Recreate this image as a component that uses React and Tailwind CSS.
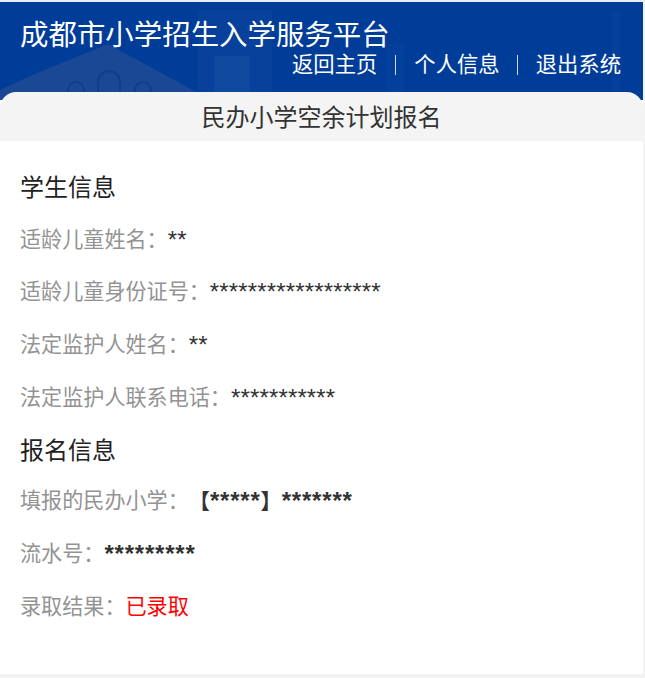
import React from 'react'

const cjk = 'font-["Liberation_Sans","Noto_Sans_CJK_SC",sans-serif]'

function Row({ label, children, className = '' }) {
  return (
    <div className="h-[52.67px] flex items-center pl-5 text-[21.1px] leading-[52px]">
      <span className="text-[#939393]">{label}</span>
      <span className={className}>{children}</span>
    </div>
  )
}

function HeaderArt() {
  return (
    <svg className="absolute inset-0 w-full h-full" viewBox="0 0 643 98" fill="none">
      <path d="M0 88 L30 74 L108 42 L200 92 L200 98 L0 98 Z" fill="#1a4894" />
      <path d="M68 92 v-4 a8 8 0 0 1 16 0 v4 M98 92 v-12 a10 10 0 0 1 22 0 v12 M135 92 v-4 a8 8 0 0 1 16 0 v4" stroke="#123d88" strokeWidth="2" />
      <rect x="198" y="8" width="74" height="90" fill="#07419b" />
      <rect x="214" y="54" width="36" height="44" fill="#0f499e" />
      <rect x="386" y="42" width="18" height="50" fill="#03409c" />
      <rect x="612" y="8" width="8" height="84" fill="#03409b" />
    </svg>
  )
}

export default function App() {
  return (
    <div className={`w-[645px] h-[678px] overflow-hidden bg-[#f3f3f3] flex flex-col ${cjk}`}>
      <div className="h-[2px] bg-[#e8edf4]" />
      <div className="w-[643px] flex-1 bg-white flex flex-col">
        {/* header */}
        <div className="relative h-[98px] bg-[#003d98] text-white overflow-hidden shrink-0">
          <HeaderArt />
          <div className="relative pl-5 pr-[22px]">
            <h1 className="text-[28.44px] leading-[32px] pt-[17px] font-normal">成都市小学招生入学服务平台</h1>
            <div className="flex justify-end items-center text-[21.33px] leading-[26px] mt-[1px]">
              <span>返回主页</span>
              <span className="w-px h-5 bg-white/80 mx-[18px]" />
              <span>个人信息</span>
              <span className="w-px h-5 bg-white/80 ml-[17px] mr-[18px]" />
              <span>退出系统</span>
            </div>
          </div>
        </div>

        {/* content */}
        <div className="-mt-2 relative rounded-t-2xl bg-[#f4f4f4] h-[48.5px] pt-[3px] shrink-0 flex items-center justify-center text-[24px] text-[#333]">
          民办小学空余计划报名
        </div>
        <div className="pt-[24px]">
          <h2 className="pl-5 text-[24px] h-[46px] font-normal text-[#222] flex items-center">学生信息</h2>
          <div className="pt-[3px]">
            <Row label="适龄儿童姓名：" className="text-[#333] text-[24px] tracking-[0.15px]">**</Row>
            <Row label="适龄儿童身份证号：" className="text-[#333] text-[24px] tracking-[0.15px]">******************</Row>
            <Row label="法定监护人姓名：" className="text-[#333] text-[24px] tracking-[0.15px]">**</Row>
            <Row label="法定监护人联系电话：" className="text-[#333] text-[24px] tracking-[0.15px]">***********</Row>
          </div>
          <h2 className="pl-5 text-[24px] h-[46px] font-normal text-[#222] flex items-center mt-[4px]">报名信息</h2>
          <div className="pt-[1px]">
            <Row label="填报的民办小学：" className="text-[#333] font-bold">
              【<span className="text-[24px] tracking-[0.8px]">*****</span>】<span className="text-[24px] tracking-[0.8px]">*******</span>
            </Row>
            <Row label="流水号：" className="text-[#333] text-[24px] font-bold tracking-[0.8px]">*********</Row>
            <Row label="录取结果：" className="text-[#ff0000]">已录取</Row>
          </div>
        </div>
      </div>
      <div className="h-[4px]" />
    </div>
  )
}
